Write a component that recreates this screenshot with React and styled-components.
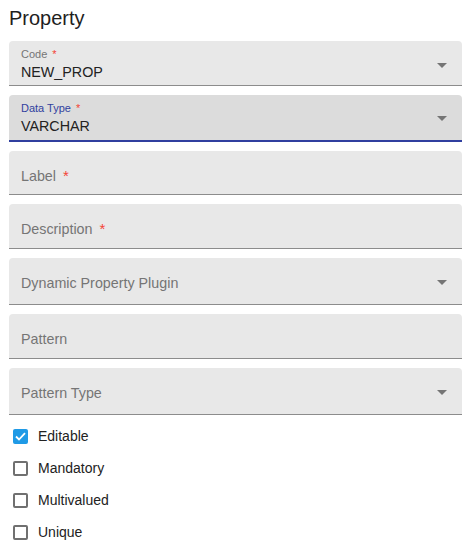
import React from "react";
import styled, { createGlobalStyle } from "styled-components";

const GlobalStyle = createGlobalStyle`
  body {
    margin: 0;
    background: #ffffff;
    font-family: "Liberation Sans", Arial, sans-serif;
  }
`;

const fields = [
  { label: "Code", value: "NEW_PROP", required: true, select: true, height: 45 },
  { label: "Data Type", value: "VARCHAR", required: true, select: true, focused: true, height: 47 },
  { label: "Label", required: true, height: 44 },
  { label: "Description", required: true, height: 45 },
  { label: "Dynamic Property Plugin", select: true, height: 47 },
  { label: "Pattern", height: 45 },
  { label: "Pattern Type", select: true, height: 47 },
];

const checks = [
  { label: "Editable", checked: true },
  { label: "Mandatory" },
  { label: "Multivalued" },
  { label: "Unique" },
];

const App = () => {
  return (
    <StyledPage>
      <GlobalStyle />
      <StyledTitle>Property</StyledTitle>
      <StyledForm>
        {fields.map((f) => (
          <StyledField key={f.label} $height={f.height} $focused={f.focused}>
            {f.value ? (
              <>
                <StyledSmallLabel $focused={f.focused}>
                  {f.label}
                  {f.required && <StyledStar $small>*</StyledStar>}
                </StyledSmallLabel>
                <StyledValue>{f.value}</StyledValue>
              </>
            ) : (
              <StyledPlaceholder>
                {f.label}
                {f.required && <StyledStar>*</StyledStar>}
              </StyledPlaceholder>
            )}
            {f.select && <StyledArrow $top={f.focused ? 21 : 22} />}
          </StyledField>
        ))}
      </StyledForm>
      <StyledChecks>
        {checks.map((c) => (
          <StyledCheckRow key={c.label}>
            <StyledBox $checked={c.checked}>
              {c.checked && (
                <svg width="11" height="9" viewBox="0 0 11 9">
                  <path
                    d="M1 4.5 L4 7.5 L10 1.2"
                    fill="none"
                    stroke="#fff"
                    strokeWidth="1.8"
                  />
                </svg>
              )}
            </StyledBox>
            <span>{c.label}</span>
          </StyledCheckRow>
        ))}
      </StyledChecks>
    </StyledPage>
  );
};

export default App;

const StyledPage = styled.div`
  width: 470px;
  padding: 0 8px 0 9px;
  box-sizing: border-box;
`;

const StyledTitle = styled.h2`
  margin: 4px 0 0;
  height: 37px;
  line-height: 28px;
  font-size: 20px;
  font-weight: 400;
  color: #1e1e1e;
`;

const StyledForm = styled.div`
  display: flex;
  flex-direction: column;
  gap: 9px;
`;

const StyledField = styled.div`
  position: relative;
  height: ${(p) => p.$height}px;
  box-sizing: border-box;
  padding: 0 12px;
  background: ${(p) => (p.$focused ? "#dcdcdc" : "#e8e8e8")};
  border-radius: 4px 4px 0 0;
  border-bottom: ${(p) => (p.$focused ? "2px solid #303f9f" : "1px solid #8c8c8c")};
`;

const StyledSmallLabel = styled.div`
  padding-top: 6px;
  font-size: 11px;
  line-height: 14px;
  color: ${(p) => (p.$focused ? "#303f9f" : "#757575")};
`;

const StyledValue = styled.div`
  margin-top: 2px;
  font-size: 14.3px;
  line-height: 18px;
  color: #222;
`;

const StyledPlaceholder = styled.div`
  padding-top: 16px;
  font-size: 14.3px;
  line-height: 18px;
  color: #757575;
`;

const StyledStar = styled.span`
  color: #f44336;
  margin-left: ${(p) => (p.$small ? "5px" : "7px")};
  font-size: ${(p) => (p.$small ? "11px" : "15px")};
`;

const StyledArrow = styled.span`
  position: absolute;
  right: 15px;
  top: ${(p) => p.$top}px;
  width: 0;
  height: 0;
  border-left: 5px solid transparent;
  border-right: 5px solid transparent;
  border-top: 5px solid #757575;
`;

const StyledChecks = styled.div`
  display: flex;
  flex-direction: column;
  padding-top: 5px;
`;

const StyledCheckRow = styled.label`
  display: flex;
  align-items: center;
  height: 32px;
  font-size: 14px;
  color: #222;
`;

const StyledBox = styled.span`
  width: 15px;
  height: 15px;
  box-sizing: border-box;
  margin: 0 10px 0 4px;
  border-radius: 2px;
  display: flex;
  align-items: center;
  justify-content: center;
  border: ${(p) => (p.$checked ? "none" : "2px solid #707070")};
  background: ${(p) => (p.$checked ? "#1f9ae6" : "transparent")};
`;
